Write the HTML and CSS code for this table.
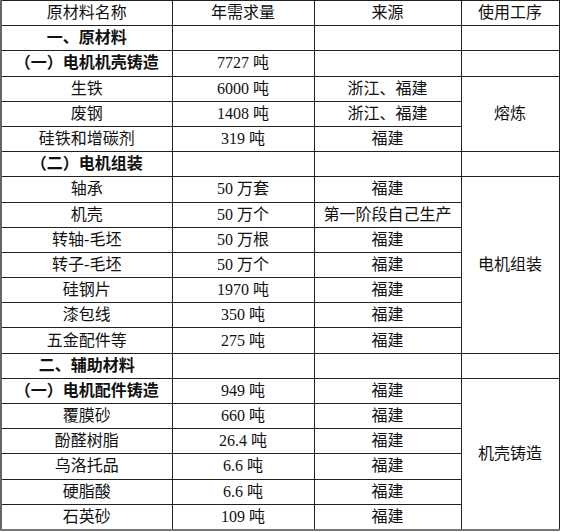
FILE: index.html
```html
<!DOCTYPE html>
<html lang="zh">
<head>
<meta charset="utf-8">
<link rel="stylesheet" href="styles.css">
</head>
<body>
<table class="mat">
<colgroup><col class="c1"><col class="c2"><col class="c3"><col class="c4"></colgroup>
<tr><td>原材料名称</td><td>年需求量</td><td>来源</td><td>使用工序</td></tr>
<tr><td class="b">一、原材料</td><td></td><td></td><td></td></tr>
<tr><td class="b">（一）电机机壳铸造</td><td>7727 吨</td><td></td><td></td></tr>
<tr><td>生铁</td><td>6000 吨</td><td>浙江、福建</td><td rowspan="3">熔炼</td></tr>
<tr><td>废钢</td><td>1408 吨</td><td>浙江、福建</td></tr>
<tr><td>硅铁和增碳剂</td><td>319 吨</td><td>福建</td></tr>
<tr><td class="b">（二）电机组装</td><td></td><td></td><td></td></tr>
<tr><td>轴承</td><td>50 万套</td><td>福建</td><td rowspan="7">电机组装</td></tr>
<tr><td>机壳</td><td>50 万个</td><td>第一阶段自己生产</td></tr>
<tr><td>转轴-毛坯</td><td>50 万根</td><td>福建</td></tr>
<tr><td>转子-毛坯</td><td>50 万个</td><td>福建</td></tr>
<tr><td>硅钢片</td><td>1970 吨</td><td>福建</td></tr>
<tr><td>漆包线</td><td>350 吨</td><td>福建</td></tr>
<tr><td>五金配件等</td><td>275 吨</td><td>福建</td></tr>
<tr><td class="b">二、辅助材料</td><td></td><td></td><td></td></tr>
<tr><td class="b">（一）电机配件铸造</td><td>949 吨</td><td>福建</td><td rowspan="6">机壳铸造</td></tr>
<tr><td>覆膜砂</td><td>660 吨</td><td>福建</td></tr>
<tr><td>酚醛树脂</td><td>26.4 吨</td><td>福建</td></tr>
<tr><td>乌洛托品</td><td>6.6 吨</td><td>福建</td></tr>
<tr><td>硬脂酸</td><td>6.6 吨</td><td>福建</td></tr>
<tr><td>石英砂</td><td>109 吨</td><td>福建</td></tr>
</table>
</body>
</html>
```

FILE: styles.css
```css
html, body {
  margin: 0;
  padding: 0;
  background: #fff;
}
.mat {
  border-collapse: collapse;
  table-layout: fixed;
  width: 558px;
  font-family: "Liberation Serif", "Noto Sans CJK SC", serif;
  font-size: 16px;
  color: #111;
  border-left: 2px solid #666;
  border-bottom: 2px solid #777;
}
.c1 { width: 171px; }
.c2 { width: 142px; }
.c3 { width: 147px; }
.c4 { width: 98px; }
.mat td {
  border: 1px solid #222;
  height: 24.2px;
  padding: 0;
  text-align: center;
  vertical-align: middle;
  line-height: 18px;
  white-space: nowrap;
}
.mat tr:last-child td { border-bottom: 2px solid #777; }
.mat td:first-child { border-left: 2px solid #666; }
.mat td.b { font-weight: bold; }
```
